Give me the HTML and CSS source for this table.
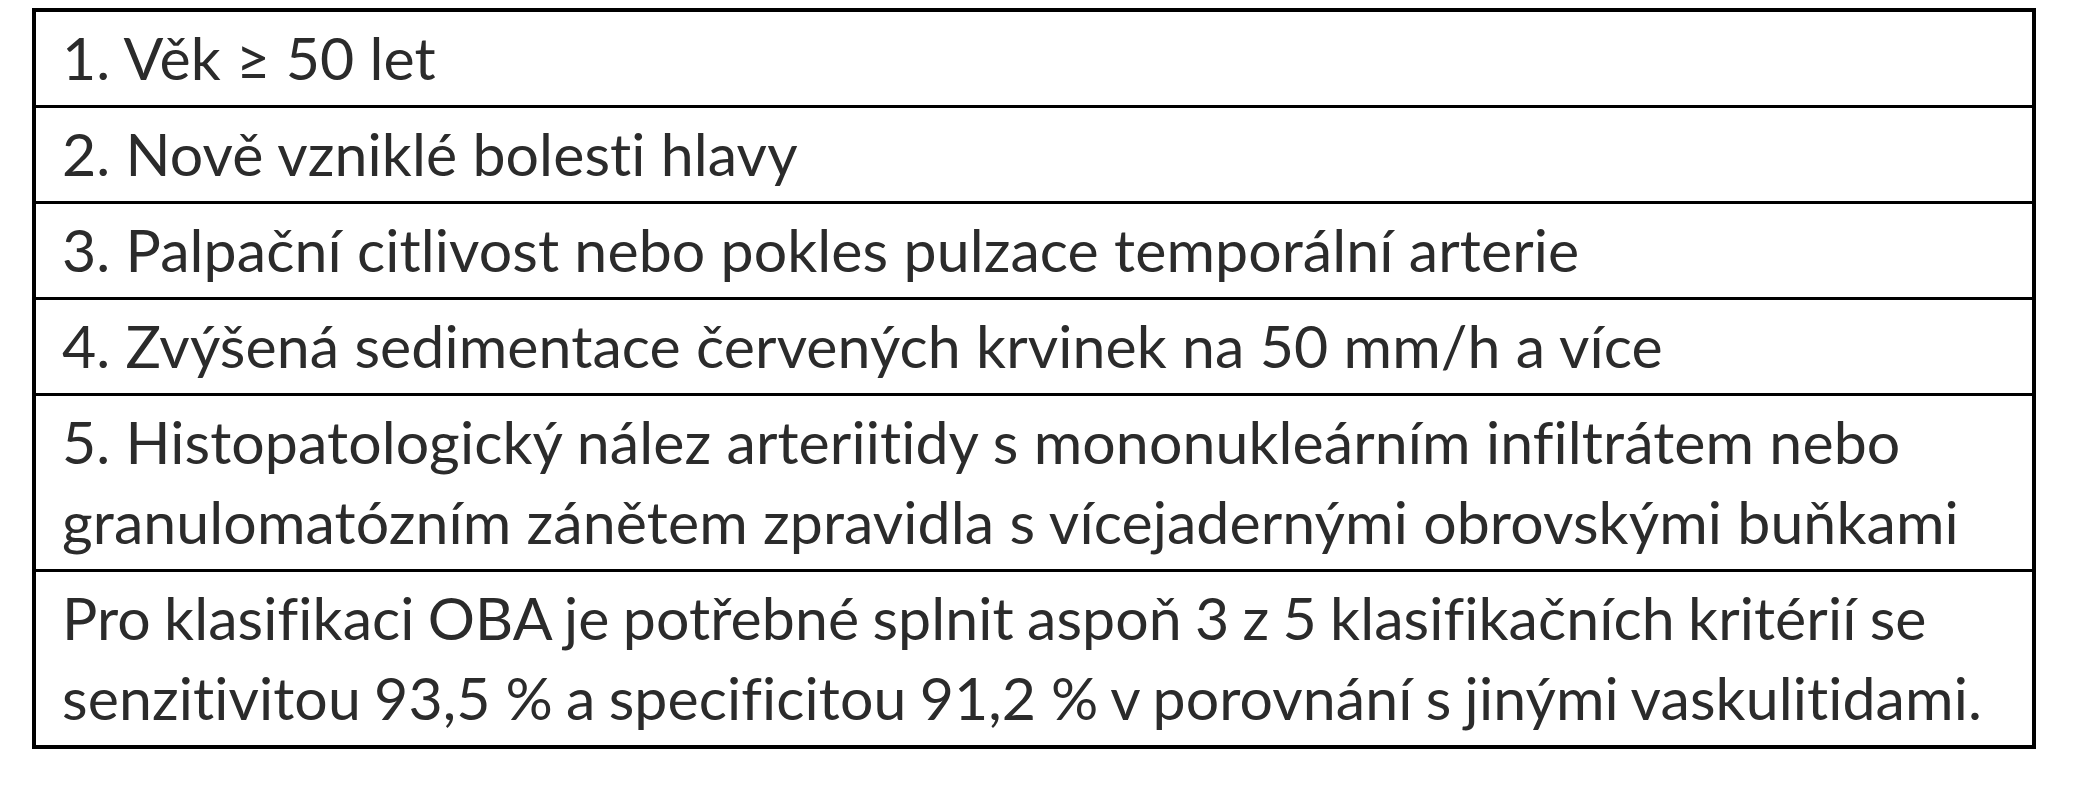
FILE: index.html
```html
<!DOCTYPE html>
<html lang="cs">
<head>
<meta charset="utf-8">
<title>Klasifikační kritéria OBA</title>
<link rel="stylesheet" href="styles.css">
</head>
<body>
<div class="criteria">
  <div class="row">1. Věk ≥ 50 let</div>
  <div class="row">2. Nově vzniklé bolesti hlavy</div>
  <div class="row">3. Palpační citlivost nebo pokles pulzace temporální arterie</div>
  <div class="row">4. Zvýšená sedimentace červených krvinek na 50 mm/h a více</div>
  <div class="row">5. Histopatologický nález arteriitidy s mononukleárním infiltrátem nebo<br>granulomatózním zánětem zpravidla s vícejadernými obrovskými buňkami</div>
  <div class="row row-note">Pro klasifikaci OBA je potřebné splnit aspoň 3 z 5 klasifikačních kritérií se<br>senzitivitou 93,5&#8239;% a specificitou 91,2&#8239;% v porovnání s jinými vaskulitidami.</div>
</div>
</body>
</html>
```
FILE: styles.css
```css
html, body {
  margin: 0;
  padding: 0;
  background: #ffffff;
}

body {
  padding: 8px 0 0 32px;
}

.criteria {
  width: 2004px;
  box-sizing: border-box;
  border: 4px solid #000000;
  display: flex;
  flex-direction: column;
  font-family: "Lato", "Open Sans", sans-serif;
  font-size: 59px;
  line-height: 80px;
  color: #2b2b2b;
}

.row {
  padding: 6px 20px 7px 26px;
  white-space: nowrap;
  letter-spacing: 0.1px;
}

.row + .row {
  border-top: 3px solid #000000;
}

.row-note {
  word-spacing: -2px;
}
```
